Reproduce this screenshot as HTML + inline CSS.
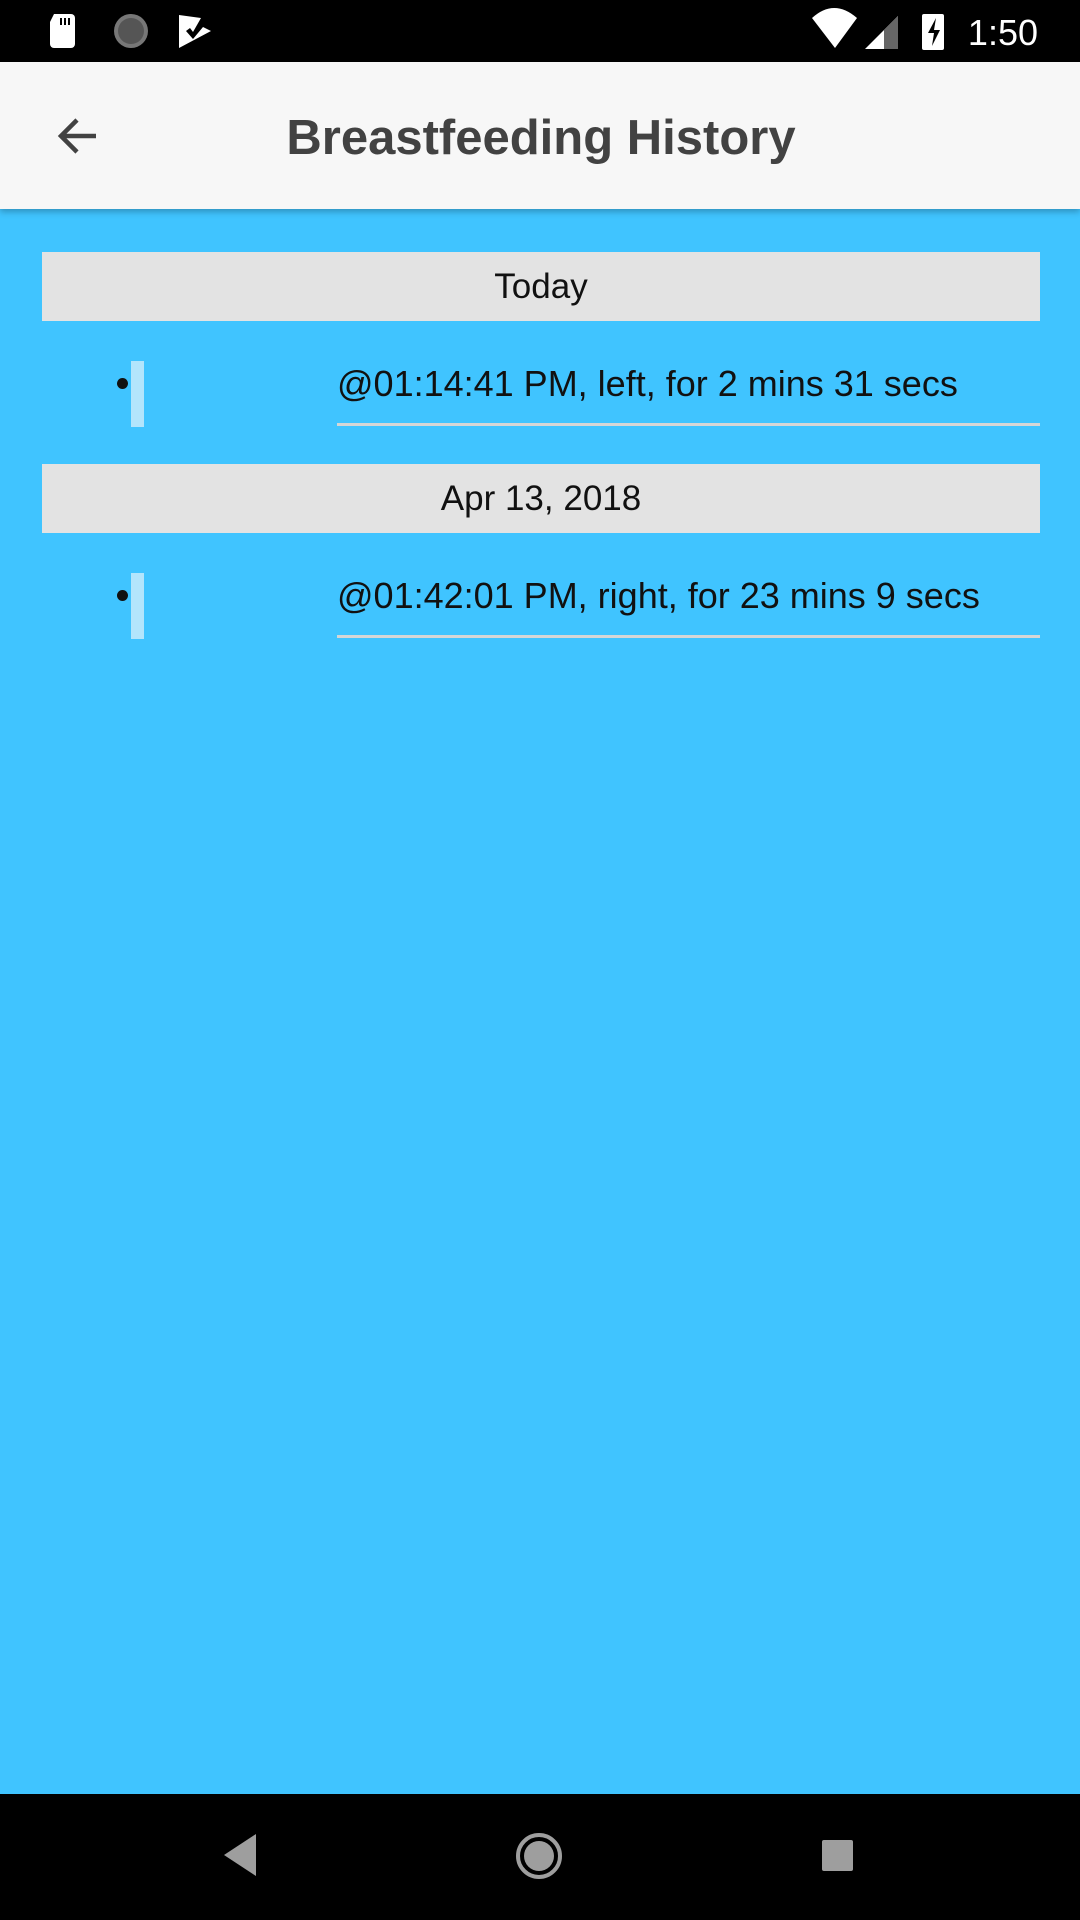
<!DOCTYPE html>
<html><head><meta charset="utf-8"><style>
*{margin:0;padding:0;box-sizing:border-box}
body{width:1080px;height:1920px;background:#40c4ff;font-family:"Liberation Sans",sans-serif;position:relative;overflow:hidden}
.abs{position:absolute}
.sb{left:0;top:0;width:1080px;height:62px;background:#000}
.ab{left:0;top:62px;width:1080px;height:147px;background:#f7f7f7;box-shadow:0 3px 6px rgba(0,0,0,.25)}
.title{left:0;width:1080px;text-align:center;top:108px;font-size:49px;font-weight:bold;color:#424242;line-height:60px;padding-left:2px}
.hdr{left:42px;width:998px;height:69px;background:#e3e3e3;text-align:center;font-size:35px;line-height:69px;color:#111}
.item{left:337px;font-size:36px;color:#111;line-height:44px}
.line{left:337px;width:703px;height:3px;background:#d6d6d6}
.bar{left:131px;width:13px;background:#b3e5fc}
.dot{left:117px;width:11px;height:11px;border-radius:50%;background:#111}
.nb{left:0;top:1794px;width:1080px;height:126px;background:#000}
</style></head><body>
<div class="abs sb"></div>
<svg class="abs" style="left:0;top:0" width="1080" height="62">
<path d="M54 14h17a4 4 0 0 1 4 4v26a4 4 0 0 1-4 4H54a4 4 0 0 1-4-4V22z" fill="#fff"/>
<rect x="60" y="18" width="2" height="7" fill="#000"/><rect x="64" y="18" width="2" height="7" fill="#000"/><rect x="68" y="18" width="2" height="7" fill="#000"/>
<circle cx="131" cy="31" r="17" fill="#777"/><circle cx="131" cy="31" r="13" fill="#555"/>
<path d="M179 15v33l32-17-8-4-10 12-7-8 4-3 3 4 8-14z" fill="#fff"/>
<path d="M812 18q22-20 45 0l-22 30z" fill="#fff"/>
<path d="M865 49l33-33v33z" fill="#fff"/><path d="M884 30v19h14V16z" fill="#666"/>
<rect x="922" y="14" width="22" height="36" rx="2" fill="#fff"/><path d="M936 18l-8 15h6l-2 13 8-16h-6z" fill="#000"/>
<text x="1038" y="45" text-anchor="end" font-family="Liberation Sans" font-size="36" fill="#fff">1:50</text>
</svg>
<div class="abs ab"></div>
<svg class="abs" style="left:52px;top:112px" width="50" height="50"><path d="M44 24H9M25 8L9 24l16 16" stroke="#424242" stroke-width="4.5" fill="none"/></svg>
<div class="abs title">Breastfeeding History</div>

<div class="abs hdr" style="top:252px">Today</div>
<div class="abs bar" style="top:361px;height:66px"></div>
<div class="abs dot" style="top:378px"></div>
<div class="abs item" style="top:362px">@01:14:41 PM, left, for 2 mins 31 secs</div>
<div class="abs line" style="top:423px"></div>

<div class="abs hdr" style="top:464px">Apr 13, 2018</div>
<div class="abs bar" style="top:573px;height:66px"></div>
<div class="abs dot" style="top:590px"></div>
<div class="abs item" style="top:574px">@01:42:01 PM, right, for 23 mins 9 secs</div>
<div class="abs line" style="top:635px"></div>

<div class="abs nb"></div>
<svg class="abs" style="left:0;top:1794px" width="1080" height="126">
<path d="M256 40v42l-32-21z" fill="#9e9e9e"/>
<circle cx="539" cy="62" r="21" fill="none" stroke="#9e9e9e" stroke-width="4"/><circle cx="539" cy="62" r="15" fill="#9e9e9e"/>
<rect x="822" y="46" width="31" height="31" rx="2" fill="#9e9e9e"/>
</svg>
</body></html>
